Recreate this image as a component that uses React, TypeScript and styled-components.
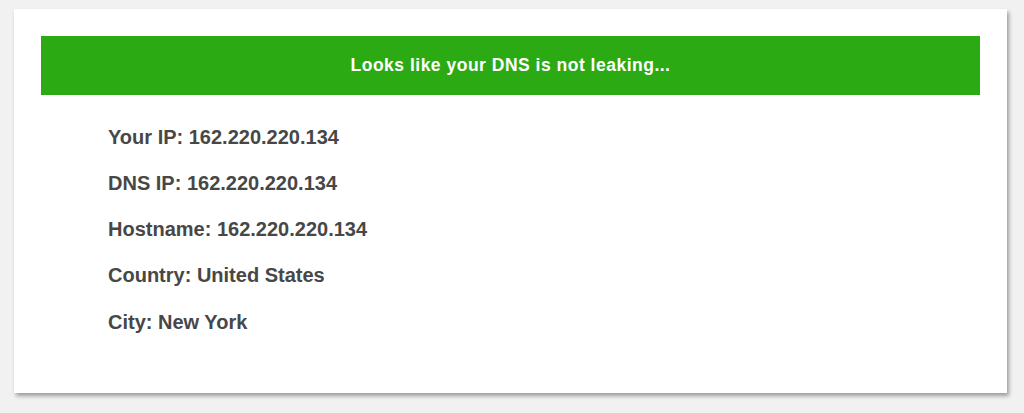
import React from "react";
import styled, { createGlobalStyle } from "styled-components";

const Global = createGlobalStyle`
  html, body { margin: 0; padding: 0; background: #f1f1f1; }
  body { font-family: "Liberation Sans", Arial, sans-serif; }
`;

const Page = styled.div`
  width: 1024px;
  height: 413px;
  padding: 9px 0 0 14px;
  box-sizing: border-box;
`;

const Card = styled.div`
  width: 993px;
  height: 384px;
  box-sizing: border-box;
  background: #ffffff;
  padding: 27px 27px 0 27px;
  box-shadow: 2px 3px 4px rgba(0, 0, 0, 0.35);
  display: flex;
  flex-direction: column;
`;

const Banner = styled.div`
  height: 59px;
  background: #2caa14;
  color: #ffffff;
  font-weight: bold;
  font-size: 17.5px;
  letter-spacing: 0.5px;
  display: flex;
  align-items: center;
  justify-content: center;
`;

const List = styled.div`
  display: flex;
  flex-direction: column;
  padding: 19px 0 0 67px;
`;

const Row = styled.div`
  height: 46.25px;
  display: flex;
  align-items: center;
  font-size: 20px;
  font-weight: bold;
  color: #474747;
`;

const rows = [
  "Your IP: 162.220.220.134",
  "DNS IP: 162.220.220.134",
  "Hostname: 162.220.220.134",
  "Country: United States",
  "City: New York",
];

export default function App() {
  return (
    <Page>
      <Global />
      <Card>
        <Banner>Looks like your DNS is not leaking...</Banner>
        <List>
          {rows.map((r) => (
            <Row key={r}>{r}</Row>
          ))}
        </List>
      </Card>
    </Page>
  );
}
